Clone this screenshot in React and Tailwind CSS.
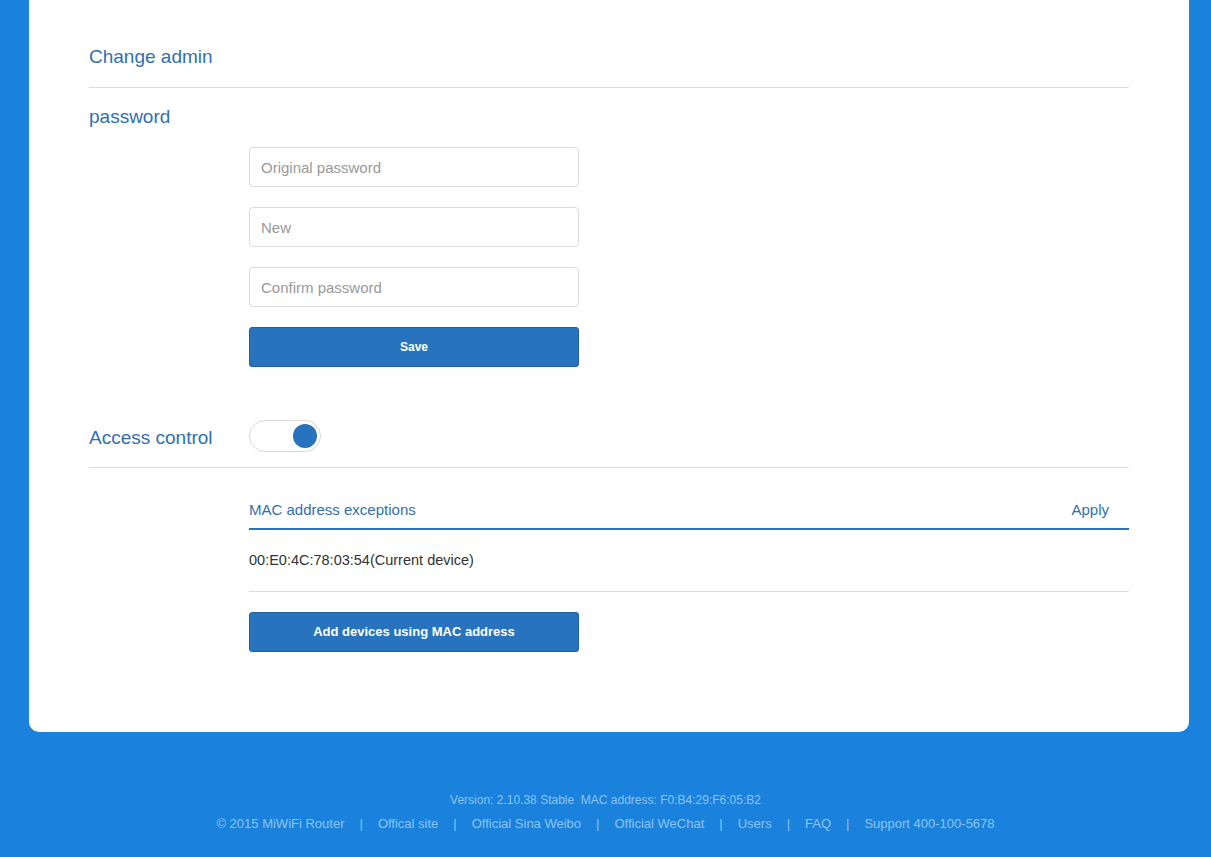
import React from 'react';

const font = { fontFamily: '"Liberation Sans", Arial, sans-serif' };

const Field = ({ placeholder }) => (
  <input
    type="text"
    placeholder={placeholder}
    className="block w-[330px] h-[40px] rounded-[4px] border border-[#dcdcdc] bg-white px-[11px] text-[15px] text-[#333] placeholder:text-[#999] outline-none"
  />
);

const BlueButton = ({ children, size = 'text-[12px]' }) => (
  <button
    className={`block w-[330px] h-[40px] rounded-[3px] border border-[#1f5f9e] bg-[#2773bd] text-white font-bold ${size}`}
  >
    {children}
  </button>
);

export default function App() {
  const links = [
    '© 2015 MiWiFi Router',
    'Offical site',
    'Official Sina Weibo',
    'Official WeChat',
    'Users',
    'FAQ',
    'Support 400-100-5678',
  ];

  return (
    <div className="min-h-[857px] bg-[#1a82dd] pb-[24px]" style={font}>
      <div className="ml-[29px] w-[1160px] rounded-b-[10px] bg-white px-[60px] pt-[42px] pb-[80px]">
        {/* change admin password */}
        <div className="border-b border-[#dcdcdc] pb-[15px]">
          <h2 className="text-[19px] leading-[30px] text-[#2f6fb4]">Change admin</h2>
        </div>
        <div className="mt-[14px] text-[19px] leading-[30px] text-[#2f6fb4]">password</div>

        <div className="ml-[160px] mt-[15px] flex flex-col gap-[20px]">
          <Field placeholder="Original password" />
          <Field placeholder="New" />
          <Field placeholder="Confirm password" />
          <BlueButton>Save</BlueButton>
        </div>

        {/* access control */}
        <div className="mt-[53px] flex items-center border-b border-[#dcdcdc] pb-[15px]">
          <div className="h-[32px] w-[160px] pt-[4px] text-[19px] leading-[28px] text-[#2f6fb4]">Access control</div>
          <div className="flex h-[32px] w-[72px] items-center justify-end rounded-full border border-[#d9d9d9] bg-white pr-[3px]">
            <div className="h-[24px] w-[24px] rounded-full bg-[#2773bd]" />
          </div>
        </div>

        <div className="ml-[160px]">
          <div className="mt-[32px] flex items-center justify-between border-b-2 border-[#2773bd] pb-[8px] pr-[20px]">
            <span className="text-[15px] leading-[20px] text-[#2f6fb4]">MAC address exceptions</span>
            <span className="text-[15px] leading-[20px] text-[#2f6fb4]">Apply</span>
          </div>
          <div className="flex h-[62px] items-center border-b border-[#dcdcdc] text-[14.5px] text-[#333]">
            00:E0:4C:78:03:54(Current device)
          </div>
          <div className="mt-[20px]">
            <BlueButton size="text-[13px]">Add devices using MAC address</BlueButton>
          </div>
        </div>
      </div>

      {/* footer */}
      <div className="mt-[59px] text-center text-[12px] leading-[18px] text-[#8ec2f0]">
        Version: 2.10.38 Stable&nbsp;&nbsp;MAC address: F0:B4:29:F6:05:B2
      </div>
      <div className="mt-[5px] flex justify-center text-[13px] leading-[20px] text-[#8ec2f0]">
        {links.map((l, i) => (
          <React.Fragment key={l}>
            {i > 0 && <span className="px-[15px]">|</span>}
            <span>{l}</span>
          </React.Fragment>
        ))}
      </div>
    </div>
  );
}
